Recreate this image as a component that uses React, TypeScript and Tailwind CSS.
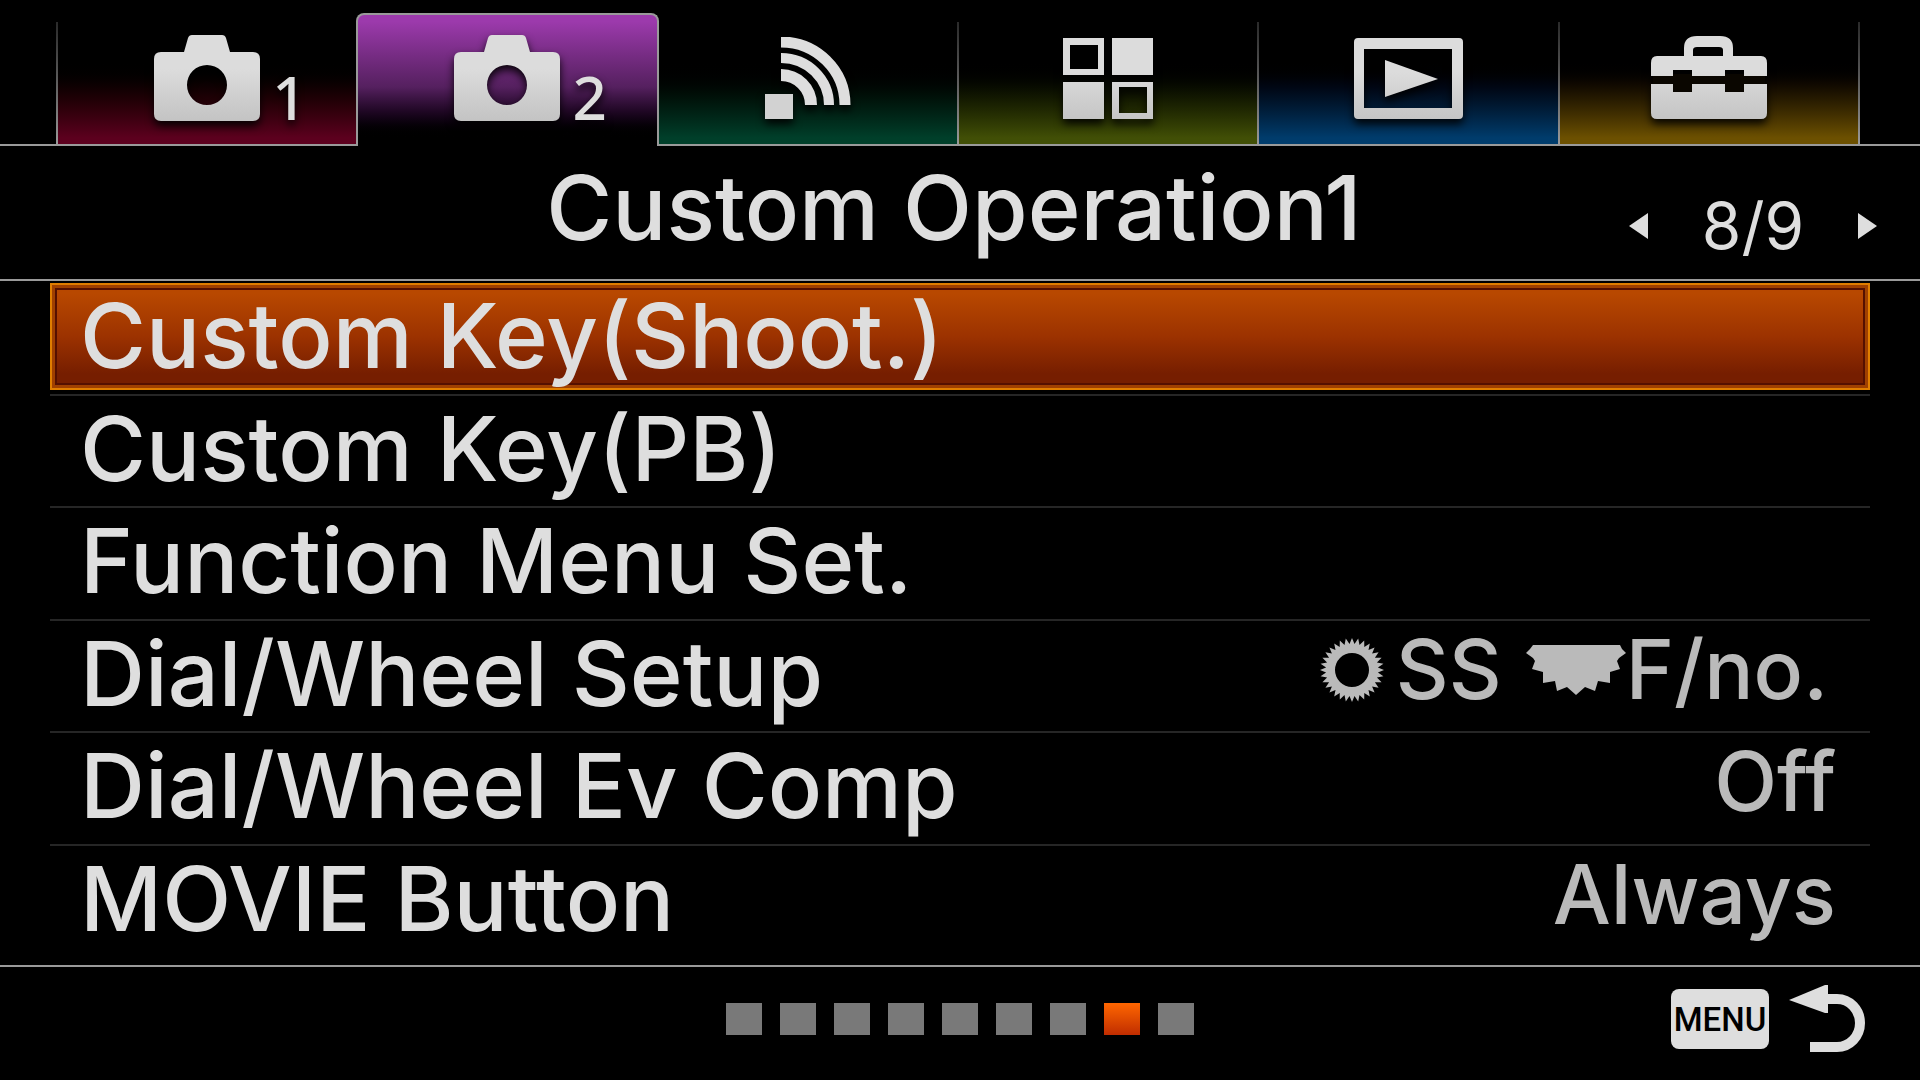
import React, { useState } from 'react';
import clsx from 'clsx';

interface Tab {
  id: string;
  label: string;
  fill: string;
  icon: React.ReactNode;
  badge?: string;
}

interface MenuItem {
  id: string;
  label: string;
  value?: React.ReactNode;
}

const CameraIcon = () => (
  <svg width="106" height="86" viewBox="0 0 106 86" fill="url(#silver)">
    <path
      fillRule="evenodd"
      d="M38 0H68Q71 0 72 3L76 17H99Q106 17 106 24V79Q106 86 99 86H7Q0 86 0 79V24Q0 17 7 17H30L34 3Q35 0 38 0ZM53 30A20 20 0 1 0 53 70A20 20 0 1 0 53 30Z"
    />
  </svg>
);

const WirelessIcon = () => (
  <svg width="86" height="82" viewBox="0 0 86 82">
    <rect x="0" y="57" width="28" height="25" fill="#d2d2d2" />
    <g fill="none" stroke="#dedede">
      <path d="M16 5A64 63 0 0 1 80 68" strokeWidth="11" />
      <path d="M16 21A48 47 0 0 1 64 68" strokeWidth="10" />
      <path d="M16 38A30 30 0 0 1 46 68" strokeWidth="12" />
    </g>
  </svg>
);

const AppsIcon = () => (
  <svg width="90" height="81" viewBox="0 0 90 81" fill="url(#silver)">
    <path fillRule="evenodd" d="M0 0H41V37H0ZM7 7V31H35V7Z" />
    <path d="M49 0H90V37H49Z" />
    <path d="M0 44H41V81H0Z" />
    <path fillRule="evenodd" d="M49 44H90V81H49ZM56 49V75H84V49Z" />
  </svg>
);

const PlaybackIcon = () => (
  <svg width="109" height="81" viewBox="0 0 109 81" fill="url(#silver)">
    <path
      fillRule="evenodd"
      d="M4 0H105Q109 0 109 4V77Q109 81 105 81H4Q0 81 0 77V4Q0 0 4 0ZM10 11V70H98V11Z"
    />
    <path d="M31 22L84 41L31 59Z" />
  </svg>
);

const ToolboxIcon = () => (
  <svg width="116" height="84" viewBox="0 0 116 84" fill="url(#silver)">
    <path d="M2 38H114V50H94V58H73V50H42V58H21V50H2Z" fill="#0a0600" />
    <path
      fillRule="evenodd"
      d="M6 20H33V12Q33 0 46 0H69Q82 0 82 12V20H110Q116 20 116 27V40H93V34H74V40H41V34H22V40H0V27Q0 20 6 20ZM42 20H72V14Q72 11 68 11H46Q42 11 42 14Z"
    />
    <path d="M0 48H22V56H41V48H74V56H93V48H116V77Q116 83 110 83H6Q0 83 0 77Z" />
  </svg>
);

const gearPath = (teeth: number, outer: number, inner: number) => {
  const points: string[] = [];
  for (let i = 0; i < teeth * 2; i++) {
    const angle = (Math.PI * i) / teeth - Math.PI / 2;
    const r = i % 2 === 0 ? outer : inner;
    points.push(`${(32 + r * Math.cos(angle)).toFixed(1)} ${(32 + r * Math.sin(angle)).toFixed(1)}`);
  }
  return `M${points.join('L')}Z`;
};

const ControlWheelIcon = () => (
  <svg width="64" height="64" viewBox="0 0 64 64" fill="#bababa">
    <path fillRule="evenodd" d={`${gearPath(32, 32, 26)}M32 15A17 17 0 1 0 32 49A17 17 0 1 0 32 15Z`} />
  </svg>
);

const ControlDialIcon = () => (
  <svg width="100" height="50" viewBox="0 0 100 50" fill="#bababa">
    <path d="M7 0H94L96 4L100 8L93 13L91 16L94 24L84 27V38L72 36L69 46L59 42L50 50L41 42L31 46L29 36L17 38V27L6 24L9 16L7 13L0 8L4 4Z" />
  </svg>
);

const ReturnIcon = () => (
  <svg width="76" height="68" viewBox="0 0 76 68">
    <path d="M0 15L36 0H39V28H36Z" fill="#dedede" />
    <path d="M38 14H48A23 24 0 0 1 48 62H21" fill="none" stroke="#dedede" strokeWidth="10" />
  </svg>
);

const tabs: Tab[] = [
  { id: 'camera1', label: 'Camera Settings1', fill: 'to-[#5c001e]', icon: <CameraIcon />, badge: '1' },
  { id: 'camera2', label: 'Camera Settings2', fill: 'to-[#5c1c6c]', icon: <CameraIcon />, badge: '2' },
  { id: 'wireless', label: 'Wireless', fill: 'to-[#003f2a]', icon: <WirelessIcon /> },
  { id: 'apps', label: 'Application', fill: 'to-[#414f06]', icon: <AppsIcon /> },
  { id: 'playback', label: 'Playback', fill: 'to-[#003c6c]', icon: <PlaybackIcon /> },
  { id: 'setup', label: 'Setup', fill: 'to-[#6c5000]', icon: <ToolboxIcon /> },
];

const items: MenuItem[] = [
  { id: 'key-shoot', label: 'Custom Key(Shoot.)' },
  { id: 'key-pb', label: 'Custom Key(PB)' },
  { id: 'function', label: 'Function Menu Set.' },
  {
    id: 'dial-setup',
    label: 'Dial/Wheel Setup',
    value: (
      <>
        <ControlWheelIcon />
        <span className="ml-3 mr-6">SS</span>
        <ControlDialIcon />
        <span className="mr-2">F/no.</span>
      </>
    ),
  },
  { id: 'dial-ev', label: 'Dial/Wheel Ev Comp', value: 'Off' },
  { id: 'movie', label: 'MOVIE Button', value: 'Always' },
];

const PAGE_COUNT = 9;

const App: React.FC = () => {
  const [activeTab, setActiveTab] = useState('camera2');
  const [page, setPage] = useState(8);
  const [selected, setSelected] = useState('key-shoot');

  return (
    <div className="min-h-screen flex flex-col bg-black text-[#dedede] font-medium font-[Inter,'Liberation_Sans',sans-serif]">
      {/* Shared icon gradient */}
      <svg className="absolute size-0" aria-hidden="true">
        <defs>
          <linearGradient id="silver" gradientUnits="userSpaceOnUse" x1="0" y1="0" x2="0" y2="84">
            <stop offset="0.4" stopColor="#dcdcdc" />
            <stop offset="1" stopColor="#c4c4c4" />
          </linearGradient>
        </defs>
      </svg>

      {/* Tabs */}
      <nav className="pt-[22px] pl-[56px] pr-[60px] border-b-2 border-[#9a9a9a]">
        <div role="tablist" className="grid grid-cols-6 gap-0.5 px-0.5 h-[122px] bg-linear-to-b from-[#2a2a2a] to-[#9a9a9a]">
          {tabs.map((tab) => {
            const active = tab.id === activeTab;
            return (
              <button
                key={tab.id}
                role="tab"
                aria-selected={active}
                aria-label={tab.label}
                onClick={() => setActiveTab(tab.id)}
                className={clsx(
                  'flex justify-center',
                  active
                    ? 'relative -mx-0.5 -mt-[9px] -mb-0.5 pt-[19px] border-2 border-b-0 border-[#9a9a9a] rounded-t-lg bg-linear-to-b from-[#9c3aac] from-5% via-[#55205f] via-55% to-black to-95%'
                    : 'pt-3 bg-linear-to-b from-black from-30% to-95% ' + tab.fill
                )}
              >
                <span className="relative h-[88px] flex items-center drop-shadow-[0_5px_4px_rgba(0,0,0,0.9)]">
                  {tab.icon}
                  {tab.badge && (
                    <span className="absolute left-full bottom-0 ml-3 text-[60px] leading-[64px] font-medium font-['Noto_Sans',sans-serif] -mb-[7px]">
                      {tab.badge}
                    </span>
                  )}
                </span>
              </button>
            );
          })}
        </div>
      </nav>

      {/* Title and pager */}
      <header className="h-[135px] grid grid-cols-[1fr_auto_1fr] items-center border-b-2 border-[#9a9a9a]">
        <h1 className="col-start-2 pb-[10px] pr-3 text-[90px] leading-none">Custom Operation1</h1>
        <div className="justify-self-end w-[248px] mr-[43px] pt-[26px] flex items-center justify-between">
          <button aria-label="Previous page" onClick={() => setPage(Math.max(1, page - 1))}>
            <svg width="19" height="26" viewBox="0 0 19 26" fill="#dedede">
              <path d="M19 0V26L0 13Z" />
            </svg>
          </button>
          <span className="text-[64px] leading-none font-normal">
            {page}/{PAGE_COUNT}
          </span>
          <button aria-label="Next page" onClick={() => setPage(Math.min(PAGE_COUNT, page + 1))}>
            <svg width="19" height="26" viewBox="0 0 19 26" fill="#dedede">
              <path d="M0 0V26L19 13Z" />
            </svg>
          </button>
        </div>
      </header>

      {/* Menu items */}
      <ul className="flex-1 grid auto-rows-fr mx-[50px] pt-0.5 pb-[7px]">
        {items.map((item) => (
          <li key={item.id} className="flex border-b-2 border-[#262626] last:border-transparent">
            <button
              onClick={() => setSelected(item.id)}
              className={clsx(
                'flex-1 mb-1 pl-[30px] pr-[34px] flex items-center justify-between',
                item.id === selected &&
                  'bg-linear-to-b from-[#b84800] from-10% via-[#9c3200] via-50% to-[#761e00] to-85% shadow-[inset_0_0_0_2px_#e07e00,inset_0_0_0_5px_#a04000,inset_0_0_0_7px_#551000]'
              )}
            >
              <span className="text-[90px] leading-none">{item.label}</span>
              {item.value && (
                <span className="pb-2 flex items-center text-[82px] leading-none text-[#bababa]">{item.value}</span>
              )}
            </button>
          </li>
        ))}
      </ul>

      {/* Page position and return */}
      <footer className="h-[115px] pb-[9px] grid grid-cols-[1fr_auto_1fr] items-center border-t-2 border-[#9a9a9a]">
        <div className="col-start-2 flex gap-[18px]">
          {Array.from({ length: PAGE_COUNT }, (_, index) => (
            <span
              key={index}
              className={clsx(
                'w-9 h-8',
                index + 1 === page ? 'bg-linear-to-b from-[#ff6600] to-[#c02c00]' : 'bg-[#797979]'
              )}
            />
          ))}
        </div>
        <button className="justify-self-end mr-[55px] flex items-center gap-5">
          <span className="w-[98px] h-[60px] rounded-lg bg-[#dedede] text-black flex items-center justify-center text-[33px] leading-none font-medium font-[Roboto,sans-serif]">
            MENU
          </span>
          <ReturnIcon />
        </button>
      </footer>
    </div>
  );
};

export default App;
